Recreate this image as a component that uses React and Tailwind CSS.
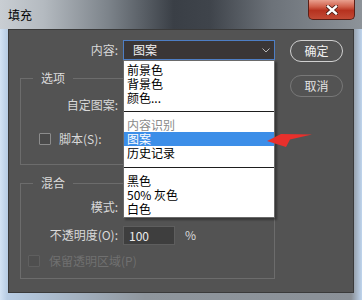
import React from 'react';

const labelCls = 'text-right text-[#d9d9d9] leading-[20px]';

const Checkbox = ({ disabled }) => (
  <span
    className={`w-[12px] h-[12px] border rounded-[1px] ${disabled ? 'border-[#5f5f5f] bg-[#4f4f4f]' : 'border-[#8c8c8c] bg-[#4a4a4a]'}`}
  />
);

const MenuItem = ({ children, active, muted }) => (
  <div
    className={`h-[14px] leading-[14px] pl-[3px] ${active ? 'bg-[#3c8ee8] text-white' : muted ? 'text-[#8a8a8a]' : 'text-black'}`}
  >
    {children}
  </div>
);

const Separator = ({ h, top }) => (
  <div className={`${h} flex flex-col`}>
    <div className={`${top} h-px bg-[#1e1e1e]`} />
  </div>
);

export default function App() {
  return (
    <div className="relative w-[362px] h-[300px] overflow-hidden flex flex-col text-[12px] font-['Noto_Sans_CJK_SC','Noto_Sans',sans-serif] bg-[linear-gradient(90deg,#d3e3f4_0%,#b8cde4_2%,#8f969d_40%,#8a9097_97%,#bfd5ee_100%)]">
      {/* title bar */}
      <div className="h-[29px] shrink-0 flex items-start pl-[8px] pr-[7px] bg-[linear-gradient(90deg,#c9ced3_0%,#b4bac0_12%,#7c838a_30%,#3a3f46_48%,#3f444b_58%,#6c7279_75%,#8d9399_100%)]">
        <span className="mt-[7px] leading-[16px] text-black">填充</span>
        <div className="ml-auto w-[47px] h-[20px] rounded-b-[5px] border border-t-0 border-[#5b1f16] bg-[linear-gradient(180deg,#e9a08f_0%,#d0604b_35%,#b6321f_55%,#c24a35_100%)] flex items-center justify-center">
          <svg width="12" height="10" viewBox="0 0 12 10">
            <path d="M2 1.5 L10 8.5 M10 1.5 L2 8.5" stroke="#4a1a12" strokeWidth="4" strokeLinecap="square" />
            <path d="M2 1.5 L10 8.5 M10 1.5 L2 8.5" stroke="#ffffff" strokeWidth="2.4" strokeLinecap="square" />
          </svg>
        </div>
      </div>

      {/* dialog body */}
      <div className="mx-[8px] h-[264px] shrink-0 bg-[#535353] border border-[#3a3a3a] flex">
        <div className="w-[266px] pt-[10px] flex flex-col">
          {/* 内容 */}
          <div className="flex items-center h-[20px]">
            <span className={`w-[109px] ${labelCls}`}>内容:</span>
            <div className="ml-[5px] w-[152px] h-[20px] bg-[#3a3636] border border-[#4e7ec4] flex items-center pl-[9px] pr-[4px]">
              <span className="text-[#f2f2f2] leading-[18px]">图案</span>
              <svg className="ml-auto" width="8" height="5" viewBox="0 0 8 5">
                <path d="M0.5 0.5 L4 4 L7.5 0.5" fill="none" stroke="#b8b8b8" strokeWidth="1" />
              </svg>
            </div>
          </div>

          {/* 选项 */}
          <fieldset className="ml-[11px] mt-[11px] w-[255px] border border-[#6c6c6c] pb-[15px]">
            <legend className="ml-[12px] px-[8px] leading-[14px] text-[#dcdcdc]">选项</legend>
            <div className="mt-[10px] h-[20px] flex items-center">
              <span className={`w-[97px] ${labelCls}`}>自定图案:</span>
            </div>
            <div className="mt-[14px] h-[20px] flex items-center pl-[18px]">
              <Checkbox />
              <span className="ml-[8px] text-[#d9d9d9] leading-[20px]">脚本(S):</span>
            </div>
          </fieldset>

          {/* 混合 */}
          <fieldset className="ml-[11px] mt-[11px] w-[255px] border border-[#6c6c6c] pb-[7px]">
            <legend className="ml-[12px] px-[8px] leading-[14px] text-[#dcdcdc]">混合</legend>
            <div className="mt-[7px] h-[20px] flex items-center">
              <span className={`w-[97px] ${labelCls}`}>模式:</span>
            </div>
            <div className="mt-[8px] h-[20px] flex items-center">
              <span className={`w-[97px] ${labelCls}`}>不透明度(O):</span>
              <div className="ml-[5px] w-[52px] h-[19px] bg-[#3e3e3e] border border-[#5e5e5e] pl-[5px] text-[#ececec] leading-[17px]">100</div>
              <span className="ml-[10px] text-[#d9d9d9]">%</span>
            </div>
            <div className="mt-[6px] h-[20px] flex items-center pl-[7px]">
              <Checkbox disabled />
              <span className="ml-[9px] text-[#707070] leading-[20px]">保留透明区域(P)</span>
            </div>
          </fieldset>
        </div>

        {/* buttons */}
        <div className="pt-[10px] pl-[15px] flex flex-col gap-[13px]">
          <button className="w-[53px] h-[22px] rounded-full border border-[#d0d0d0] text-[#f2f2f2] leading-[20px]">确定</button>
          <button className="w-[53px] h-[22px] rounded-full border border-[#787878] text-[#e2e2e2] leading-[20px]">取消</button>
        </div>
      </div>

      {/* open dropdown list */}
      <div className="absolute left-[123px] top-[60px] w-[152px] bg-white border border-[#6a6a6a] shadow-[2px_2px_2px_rgba(0,0,0,0.35)] pt-[2px] pb-px">
        <MenuItem>前景色</MenuItem>
        <MenuItem>背景色</MenuItem>
        <MenuItem>颜色...</MenuItem>
        <Separator h="h-[13px]" top="mt-[6px]" />
        <MenuItem muted>内容识别</MenuItem>
        <MenuItem active>图案</MenuItem>
        <MenuItem>历史记录</MenuItem>
        <Separator h="h-[14px]" top="mt-[7px]" />
        <MenuItem>黑色</MenuItem>
        <MenuItem>50% 灰色</MenuItem>
        <MenuItem>白色</MenuItem>
      </div>

      {/* red annotation arrow */}
      <svg className="absolute left-[265px] top-[130px]" width="52" height="20" viewBox="0 0 52 20">
        <path d="M2 11 L16 4 L47 4.5 L25 9.5 L21 17 Z" fill="#e8302c" />
      </svg>
    </div>
  );
}
